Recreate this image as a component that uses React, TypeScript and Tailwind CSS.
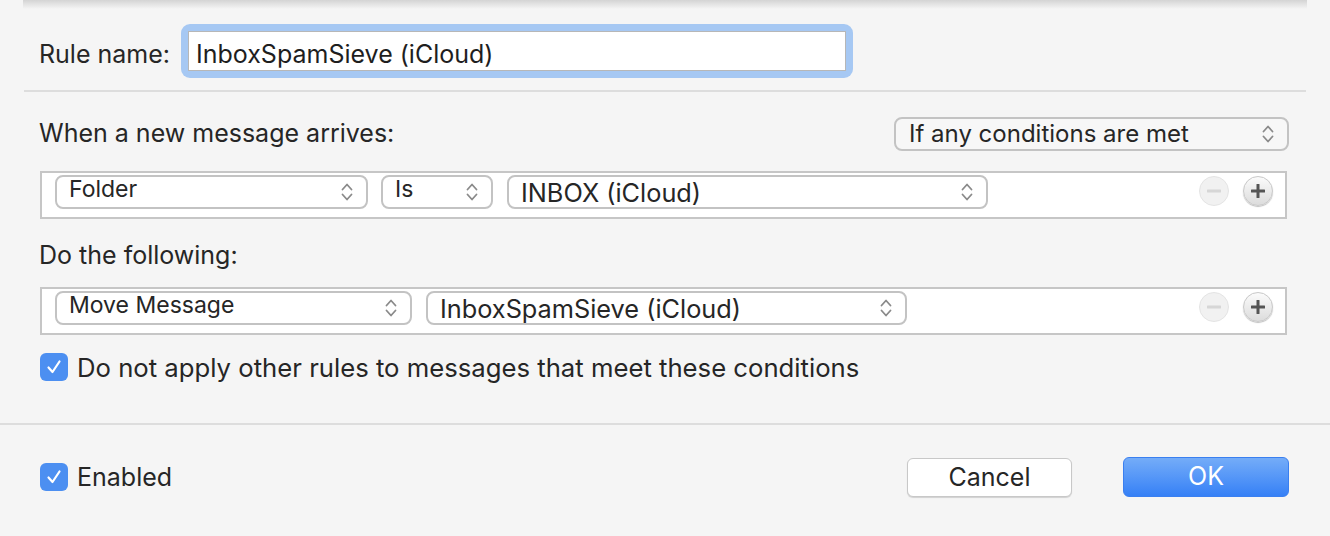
import React from "react";

const FONT = { fontFamily: "Inter, 'Noto Sans', 'Liberation Sans', sans-serif" };

// ===== SMALL CONTROLS =====

function Chevrons() {
  return (
    <svg width="14" height="22" viewBox="0 0 14 22" fill="none" className="shrink-0">
      <path d="M2.5 8.5 L7 3.5 L11.5 8.5" stroke="#8a8a8a" strokeWidth="1.8" strokeLinecap="round" strokeLinejoin="round" />
      <path d="M2.5 13.5 L7 18.5 L11.5 13.5" stroke="#8a8a8a" strokeWidth="1.8" strokeLinecap="round" strokeLinejoin="round" />
    </svg>
  );
}

interface PopupProps {
  label: string;
  width: string;
  small?: boolean;
}

// small popups (field/operator) sit their text higher and a bit smaller, like the original
function Popup({ label, width, small = false }: PopupProps) {
  return (
    <div
      className={`${width} h-[34px] flex items-center justify-between rounded-[8px] border-2 border-[#c3c3c3] bg-white pl-[12px] pr-[12px]`}
    >
      <span
        className={`text-[#262626] leading-none ${small ? "text-[23px] -mt-[5px]" : "text-[25.3px] mt-[1px]"}`}
      >
        {label}
      </span>
      <Chevrons />
    </div>
  );
}

function CircleButton({ kind }: { kind: "plus" | "minus" }) {
  const enabled = kind === "plus";
  return (
    <div
      className={`w-[30px] h-[30px] rounded-full flex items-center justify-center ${
        enabled
          ? "bg-gradient-to-b from-[#fbfbfb] to-[#dcdcdc] border border-[#c9c9c9] shadow-[0_1px_1px_rgba(0,0,0,0.25)]"
          : "bg-[#f1f1f1] border border-[#e4e4e4]"
      }`}
    >
      <svg width="18" height="18" viewBox="0 0 18 18">
        <rect x="2" y="7.5" width="14" height="3" rx="0.5" fill={enabled ? "#555555" : "#d6d6d6"} />
        {enabled && <rect x="7.5" y="2" width="3" height="14" rx="0.5" fill="#555555" />}
      </svg>
    </div>
  );
}

function Checkbox() {
  return (
    <div className="w-[28px] h-[28px] rounded-[6px] bg-[#4c8ff1] flex items-center justify-center shrink-0">
      <svg width="18" height="18" viewBox="0 0 18 18" fill="none">
        <path d="M3.5 9.5 L7.5 14 L14.5 3.5" stroke="white" strokeWidth="2.2" strokeLinecap="round" strokeLinejoin="round" />
      </svg>
    </div>
  );
}

function RuleRow({ children }: { children: React.ReactNode }) {
  return (
    <div className="ml-[40px] mr-[43px] h-[48px] border-2 border-[#c6c6c6] bg-white flex items-start pt-[2px] pl-[13px] pr-[12px]">
      <div className="flex items-center gap-[13px]">{children}</div>
      <div className="ml-auto flex items-center gap-[14px] mt-[1px]">
        <CircleButton kind="minus" />
        <CircleButton kind="plus" />
      </div>
    </div>
  );
}

// ===== DIALOG =====

export default function App() {
  return (
    <div className="w-[1330px] h-[536px] bg-[#f5f5f5] text-[#262626] overflow-hidden flex flex-col" style={FONT}>
      {/* sheet top shadow */}
      <div className="mx-[23px] h-[9px] bg-gradient-to-b from-[#d4d4d4] to-[#f5f5f5]" />

      {/* rule name */}
      <div className="mt-[15px] h-[54px] flex items-center pl-[39px]">
        <span className="text-[25px] w-[142px] translate-y-[4px]">Rule name:</span>
        <div className="w-[672px] h-[54px] rounded-[9px] bg-[#a6c8f3] p-[7px]">
          <div className="h-full bg-white border border-[#b7b7b7] flex items-center pl-[7px]">
            <span className="text-[25px] text-[#1e1e1e] translate-y-[4px]">InboxSpamSieve (iCloud)</span>
          </div>
        </div>
      </div>

      <div className="mt-[12px] mx-[24px] h-[2px] bg-[#dddddd]" />

      {/* conditions */}
      <div className="mt-[25px] h-[34px] flex items-center pl-[39px] pr-[41px]">
        <span className="text-[25px]">When a new message arrives:</span>
        <div className="ml-auto w-[395px] h-[34px] flex items-center justify-between rounded-[8px] border-2 border-[#c3c3c3] bg-[#f7f7f7] pl-[13px] pr-[12px]">
          <span className="text-[24px] leading-none">If any conditions are met</span>
          <Chevrons />
        </div>
      </div>

      <div className="mt-[20px]">
        <RuleRow>
          <Popup label="Folder" width="w-[313px]" small />
          <Popup label="Is" width="w-[112px]" small />
          <div className="ml-[1px]">
            <Popup label="INBOX (iCloud)" width="w-[481px]" />
          </div>
        </RuleRow>
      </div>

      {/* actions */}
      <div className="mt-[21px] h-[30px] flex items-center pl-[39px]">
        <span className="text-[25px] translate-y-[1px]">Do the following:</span>
      </div>

      <div className="mt-[17px]">
        <RuleRow>
          <Popup label="Move Message" width="w-[357px]" small />
          <div className="ml-[1px]">
            <Popup label="InboxSpamSieve (iCloud)" width="w-[481px]" />
          </div>
        </RuleRow>
      </div>

      <div className="mt-[18px] h-[28px] flex items-center gap-[9px] pl-[40px]">
        <Checkbox />
        <span className="text-[25.7px] translate-y-[1px]">Do not apply other rules to messages that meet these conditions</span>
      </div>

      <div className="mt-[42px] h-[2px] bg-[#dddddd]" />

      {/* footer */}
      <div className="mt-[32px] h-[40px] flex items-center pl-[40px] pr-[41px]">
        <Checkbox />
        <span className="ml-[9px] text-[25px] translate-y-[1px]">Enabled</span>
        <button className="ml-auto w-[165px] h-[39px] rounded-[6px] bg-white border border-[#c8c8c8] shadow-[0_1px_1px_rgba(0,0,0,0.15)] text-[25px] text-[#262626]">
          Cancel
        </button>
        <button className="ml-[51px] w-[166px] h-[40px] rounded-[6px] bg-gradient-to-b from-[#74acf8] to-[#3580f6] border border-[#3a7ff0] text-[25px] text-white">
          OK
        </button>
      </div>
    </div>
  );
}
